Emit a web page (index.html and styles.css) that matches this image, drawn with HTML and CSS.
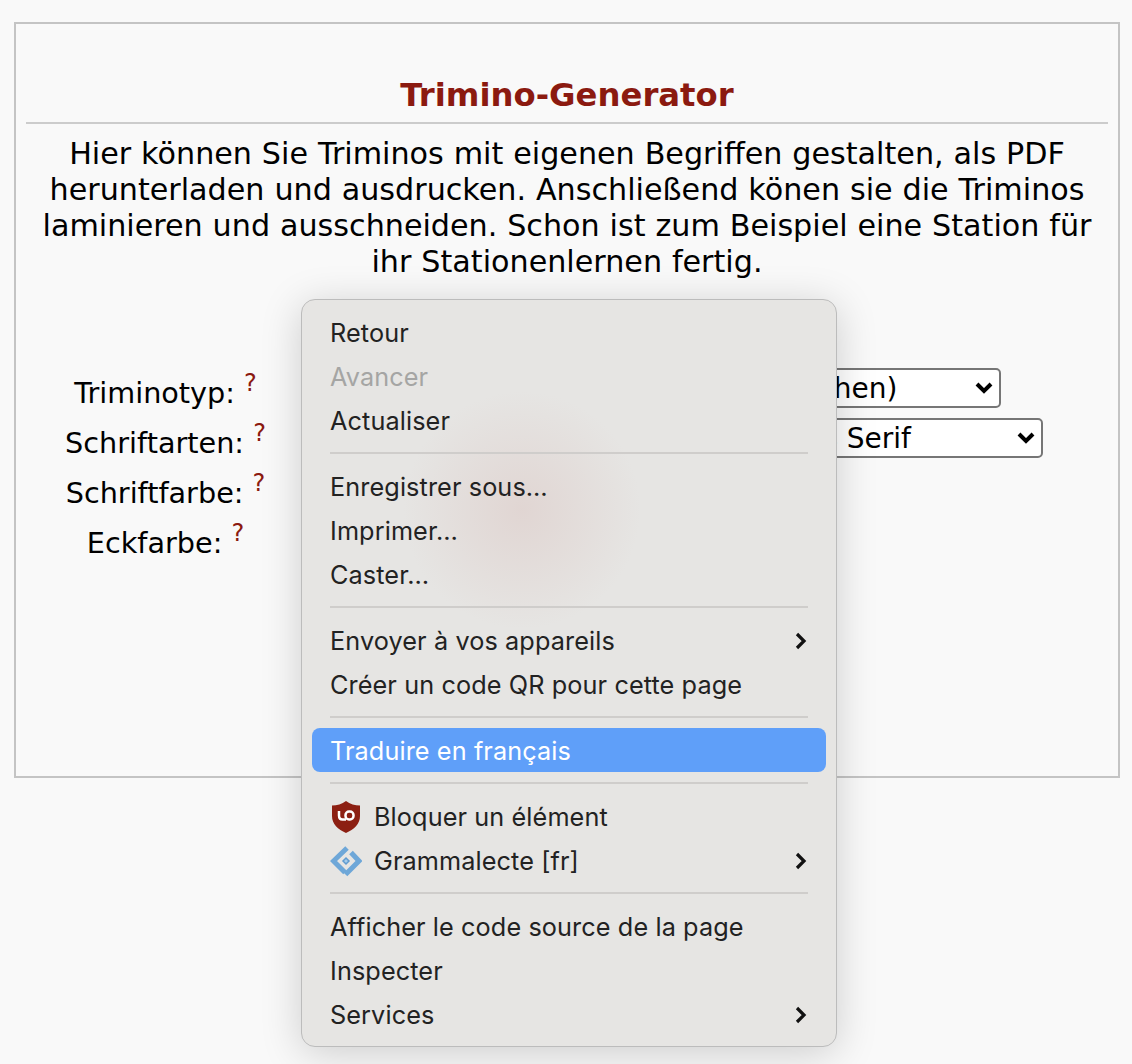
FILE: index.html

```html
<!DOCTYPE html>
<html>
<head>
<meta http-equiv="Content-Type" content="text/html;charset=utf-8">
<title>Trimino-Generator</title>
<link rel="stylesheet" href="styles.css">
</head>
<body>
<div class="box">
  <h1>Trimino-Generator</h1>
  <p class="intro">Hier können Sie Triminos mit eigenen Begriffen gestalten, als PDF herunterladen und ausdrucken. Anschließend könen sie die Triminos laminieren und ausschneiden. Schon ist zum Beispiel eine Station für ihr Stationenlernen fertig.</p>
  <form class="form">
    <div class="row">
      <label>Triminotyp: <sup>?</sup></label>
      <div class="select-wrap type">
        <select><option>Standard (mit Zeichen)</option></select>
        <svg class="caret" viewBox="0 0 18 12"><path d="M2 2l7 7 7-7"/></svg>
      </div>
    </div>
    <div class="row">
      <label>Schriftarten: <sup>?</sup></label>
      <div class="select-wrap font">
        <select><option>Liberation Sans Serif</option></select>
        <svg class="caret" viewBox="0 0 18 12"><path d="M2 2l7 7 7-7"/></svg>
      </div>
    </div>
    <div class="row">
      <label>Schriftfarbe: <sup>?</sup></label>
    </div>
    <div class="row">
      <label>Eckfarbe: <sup>?</sup></label>
    </div>
  </form>
</div>

<div class="menu">
  <div class="glow"></div>
  <div class="item">Retour</div>
  <div class="item disabled">Avancer</div>
  <div class="item">Actualiser</div>
  <div class="sep"></div>
  <div class="item">Enregistrer sous…</div>
  <div class="item">Imprimer…</div>
  <div class="item">Caster…</div>
  <div class="sep"></div>
  <div class="item">Envoyer à vos appareils
    <svg class="arrow" viewBox="0 0 12 18"><path d="M2 2l7 7-7 7"/></svg>
  </div>
  <div class="item">Créer un code QR pour cette page</div>
  <div class="sep"></div>
  <div class="item active">Traduire en français</div>
  <div class="sep after-active"></div>
  <div class="item with-icon">
    <svg class="icon" viewBox="0 0 32 32">
      <path class="shield" d="M16 0C20 3 25 4.500 30 4.500V15C30 23 24 28.500 16 32 8 28.500 2 23 2 15V4.500C7 4.500 12 3 16 0Z"/>
      <path class="ub" d="M9 10V14.500Q9 18.500 12.500 18.500H16"/>
      <rect class="ub" x="15.500" y="10.500" width="8" height="8" rx="3.500"/>
    </svg>
    Bloquer un élément
  </div>
  <div class="item with-icon">
    <svg class="icon" viewBox="0 0 32 32">
      <path class="gram" d="M17 3L3.500 16 15 27.500"/>
      <path class="gram" d="M21 7.500L29 16 15.500 29.500"/>
      <path class="gram-in" d="M16 13L19 16 16 19 13 16Z"/>
    </svg>
    Grammalecte [fr]
    <svg class="arrow" viewBox="0 0 12 18"><path d="M2 2l7 7-7 7"/></svg>
  </div>
  <div class="sep"></div>
  <div class="item">Afficher le code source de la page</div>
  <div class="item">Inspecter</div>
  <div class="item">Services
    <svg class="arrow" viewBox="0 0 12 18"><path d="M2 2l7 7-7 7"/></svg>
  </div>
</div>
</body>
</html>
```

FILE: styles.css

```css
html, body {
    margin: 0;
    height: 100%;
    overflow: hidden;
}

body {
    background: #f9f9f9;
    color: #000;
    font-family: "DejaVu Sans", Verdana, sans-serif;
    padding: 22px 12px 0 14px;
    box-sizing: border-box;
}

.box {
    border: 2px solid #c4c4c4;
    height: 756px;
    box-sizing: border-box;
    padding: 0 10px;
}

h1 {
    margin: 0;
    padding-top: 51px;
    padding-bottom: 7px;
    font-size: 32.300px;
    line-height: 40px;
    font-weight: bold;
    text-align: center;
    color: #8b1a10;
    border-bottom: 2px solid #cccccc;
}

.intro {
    margin: 12px 0 0;
    font-size: 30.200px;
    line-height: 36px;
    word-spacing: 0.300px;
    text-align: center;
}

.form {
    margin-top: 88px;
    display: flex;
    flex-direction: column;
}

.row {
    height: 50px;
    display: flex;
    align-items: flex-start;
    font-size: 28.700px;
}

.row label {
    width: 279px;
    margin-top: 5px;
    line-height: 40px;
    text-align: center;
    flex: none;
}

sup {
    font-size: 24px;
    line-height: 0;
    color: #8b1a10;
    position: relative;
    top: -1px;
}

.select-wrap {
    position: relative;
    margin-left: 245px;
}

.select-wrap select {
    appearance: none;
    -webkit-appearance: none;
    display: block;
    height: 40px;
    background: #fff;
    border: 2px solid #767676;
    border-radius: 5px;
    font: inherit;
    font-size: 28px;
    color: #000;
}

.type select { width: 451px; padding: 0 0 0 20px; }
.font select { width: 493px; padding: 0 0 0 69px; }

.caret {
    position: absolute;
    right: 8px;
    top: 14px;
    width: 18px;
    height: 12px;
    fill: none;
    stroke: #000;
    stroke-width: 4;
}

/* context menu */
.menu {
    position: absolute;
    left: 301px;
    top: 299px;
    width: 536px;
    height: 748px;
    box-sizing: border-box;
    padding: 11px 10px 10px;
    background: #e6e5e3;
    border: 1px solid #bcbcbc;
    border-radius: 14px;
    box-shadow: 0 6px 40px rgba(0, 0, 0, 0.18);
    font-family: Inter, "Noto Sans", sans-serif;
    font-size: 25.250px;
    letter-spacing: 0.100px;
    color: #222;
    overflow: hidden;
}

.glow {
    position: absolute;
    left: 100px;
    top: 90px;
    width: 240px;
    height: 240px;
    border-radius: 50%;
    background: radial-gradient(circle, rgba(216, 190, 186, 0.4), rgba(216, 190, 186, 0) 70%);
}

.item {
    position: relative;
    height: 44px;
    line-height: 44px;
    padding: 0 18px;
    border-radius: 8px;
    display: flex;
    align-items: center;
}

.disabled { color: #a5a5a4; }

.active {
    background: #5f9ff9;
    color: #fff;
    padding-top: 2px;
    box-sizing: border-box;
}

.sep {
    height: 2px;
    margin: 9px 18px 11px;
    background: #cfcdcb;
    position: relative;
}

.sep + .active { margin-top: -1px; }

.after-active { margin: 10px 18px 11px; }

.arrow {
    position: absolute;
    right: 19px;
    top: 13px;
    width: 12px;
    height: 18px;
    fill: none;
    stroke: #111;
    stroke-width: 3.200;
}

.with-icon { gap: 12px; }

.icon {
    width: 32px;
    height: 32px;
    flex: none;
}

.shield { fill: #8c1f12; }
.ub { fill: none; stroke: #fff; stroke-width: 2.500; }
.gram { fill: none; stroke: #6ea7d8; stroke-width: 5; }
.gram-in { fill: #a4cbea; stroke: #5f9bd0; stroke-width: 1.500; }
```
